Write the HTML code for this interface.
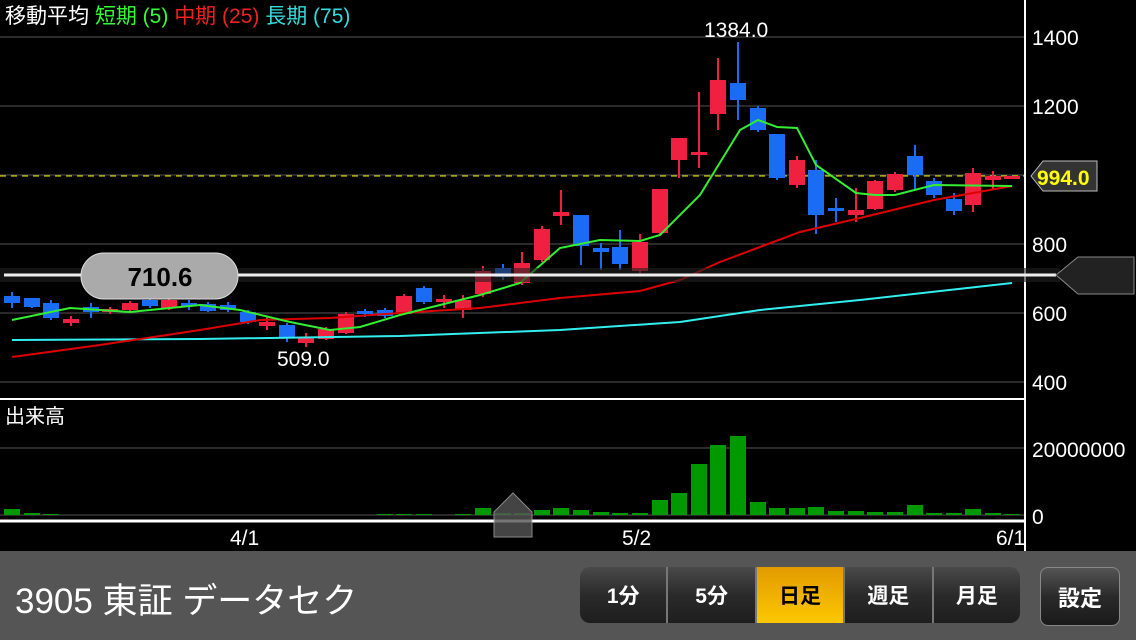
<!DOCTYPE html>
<html><head><meta charset="utf-8"><style>
body{margin:0;width:1136px;height:640px;background:#000;overflow:hidden;font-family:"Liberation Sans","Noto Sans CJK JP",sans-serif;}
svg{position:absolute;left:0;top:0}
.bar{position:absolute;left:0;top:551px;width:1136px;height:89px;background:#555;}
.title{position:absolute;left:15px;top:22px;color:#fff;font-size:35px;}
.seg{position:absolute;left:580px;top:16px;width:440px;height:56px;border-radius:10px;background:linear-gradient(#4a4a4a,#2a2a2a 50%,#1e1e1e);display:flex;overflow:hidden;}
.seg div{flex:1;color:#fff;font-size:21px;font-weight:bold;display:flex;align-items:center;justify-content:center;border-right:2px solid #777}
.seg div:last-child{border-right:none}
.seg .on{background:linear-gradient(#e39a00,#fbc800);color:#000}
.set{position:absolute;left:1040px;top:16px;width:80px;height:59px;border-radius:8px;background:linear-gradient(#555,#2a2a2a 50%,#1a1a1a);border:1px solid #888;box-sizing:border-box;color:#fff;font-size:22px;font-weight:bold;display:flex;align-items:center;justify-content:center}
</style></head><body>
<svg width="1136" height="640" font-family="Liberation Sans, Noto Sans CJK JP, sans-serif">
<g stroke="#555" stroke-width="1">
<line x1="0" y1="37" x2="1025" y2="37"/><line x1="0" y1="106" x2="1025" y2="106"/><line x1="0" y1="175" x2="1025" y2="175"/><line x1="0" y1="244" x2="1025" y2="244"/><line x1="0" y1="313" x2="1025" y2="313"/><line x1="0" y1="382" x2="1025" y2="382"/><line x1="0" y1="448" x2="1025" y2="448"/><line x1="0" y1="515" x2="1025" y2="515"/>
</g>
<line x1="0" y1="176" x2="1025" y2="176" stroke="#ee0" stroke-dasharray="6,5"/>
<line x1="0" y1="399" x2="1025" y2="399" stroke="#fff" stroke-width="2"/>
<line x1="1025" y1="0" x2="1025" y2="551" stroke="#fff" stroke-width="2"/>
<line x1="0" y1="521" x2="1025" y2="521" stroke="#fff" stroke-width="3"/>
<g fill="#fff" font-size="21">
<text x="1032" y="45">1400</text><text x="1032" y="114">1200</text><text x="1032" y="252">800</text><text x="1032" y="321">600</text><text x="1032" y="390">400</text><text x="1032" y="457">20000000</text><text x="1032" y="524">0</text>
<text x="230" y="545">4/1</text><text x="622" y="545">5/2</text><text x="996" y="545">6/1</text>
<text x="277" y="366">509.0</text><text x="704" y="37">1384.0</text>
<text x="5" y="423" font-size="20">出来高</text>
</g>
<text x="5" y="23" font-size="21" fill="#fff">移動平均 <tspan fill="#3f3">短期 (5)</tspan> <tspan fill="#e22">中期 (25)</tspan> <tspan fill="#3dd">長期 (75)</tspan></text>
<g id="c"></g>
<polyline fill="none" stroke="#3ee" stroke-width="2" points="12,340 200,339 400,336 560,330 680,322 760,310 860,300 1012,283"/>
<polyline fill="none" stroke="#d00" stroke-width="2" points="12,357 100,345 200,330 260,320 330,318 400,313 480,308 560,298 640,291 680,280 720,262 800,232 860,218 934,200 1012,186"/>
<polyline fill="none" stroke="#3e3" stroke-width="2" points="12,320 70,308 130,312 200,305 240,310 290,322 330,330 360,327 400,315 440,305 480,295 520,283 560,248 600,240 640,241 660,235 700,195 740,130 758,120 777,127 797,128 816,165 856,193 875,195 895,195 934,185 1012,186"/>
<rect x="0" y="268" width="1060" height="14" fill="#222" opacity=".6"/>
<line x1="4" y1="275" x2="1056" y2="275" stroke="#eee" stroke-width="3"/>
<rect x="81" y="253" width="157" height="46" rx="23" fill="#aaa" stroke="#ddd"/>
<text x="160" y="286" font-size="26" font-weight="bold" text-anchor="middle" fill="#000">710.6</text>
<path d="M1056,275 L1078,257 H1134 V294 H1078 Z" fill="#222" stroke="#888"/>
<path d="M1031,176 L1043,161 H1097 V191 H1043 Z" fill="#333" stroke="#bbb"/>
<text x="1037" y="185" font-size="21" font-weight="bold" fill="#ff0">994.0</text>
<path d="M494,537 V512 L513,493 L532,512 V537 Z" fill="#555" opacity=".8" stroke="#aaa"/>
</svg>
<script>
var C=[[12,'b',296,303,292,308,6],[32,'b',298,307,298,308,2],[51,'b',303,318,300,320,1],[71,'r',319,323,316,326,0],[91,'b',307,312,303,318,0],[110,'r',309,312,307,314,0],[130,'r',303,310,301,312,0],[150,'b',300,306,298,308,0],[169,'r',300,308,298,310,0],[189,'b',303,306,300,310,0],[208,'b',304,311,302,312,0],[228,'b',305,310,302,312,0],[248,'b',312,322,310,324,0],[267,'r',322,326,316,330,0],[287,'b',325,338,323,342,0],[306,'r',337,343,333,347,0],[326,'r',329,339,327,340,0],[346,'r',314,333,312,334,0],[365,'b',311,314,309,317,0],[385,'b',310,316,308,318,1],[404,'r',296,314,294,315,1],[424,'b',288,302,286,304,1],[444,'r',299,302,295,308,0],[463,'r',300,310,295,318,1],[483,'r',271,294,266,297,7],[503,'b',268,277,264,280,2],[522,'r',263,283,252,285,2],[542,'r',229,260,226,262,5],[561,'r',212,216,190,225,7],[581,'b',215,246,215,265,5],[601,'b',248,252,243,270,3],[620,'b',247,264,230,270,2],[640,'r',242,271,234,273,2],[660,'r',189,233,189,235,15],[679,'r',138,160,138,178,22],[699,'r',152,155,92,168,51],[718,'r',80,114,58,130,70],[738,'b',83,100,42,120,79],[758,'b',108,130,106,132,13],[777,'b',134,178,134,180,7],[797,'r',160,185,156,188,7],[816,'b',170,215,160,234,8],[836,'b',208,210,198,222,4],[856,'r',210,215,188,222,4],[875,'r',181,209,180,210,3],[895,'r',174,190,172,192,3],[915,'b',156,175,145,190,10],[934,'b',181,195,178,198,2],[954,'b',199,211,193,215,2],[973,'r',173,205,168,212,6],[993,'r',176,180,171,190,2],[1012,'r',176,178,176,178,1]];
var s='';C.forEach(function(c){var col=c[1]=='r'?'#f02040':'#1a6cf5';var x=c[0];var h=Math.max(3,c[3]-c[2]);
s+='<line x1="'+x+'" y1="'+c[4]+'" x2="'+x+'" y2="'+c[5]+'" stroke="'+col+'" stroke-width="2"/>';
s+='<rect x="'+(x-8)+'" y="'+c[2]+'" width="16" height="'+h+'" fill="'+col+'"/>';
if(c[6])s+='<rect x="'+(x-8)+'" y="'+(515-c[6])+'" width="16" height="'+c[6]+'" fill="#090"/>';});
document.getElementById('c').innerHTML=s;
</script>
<div class="bar">
<div class="title">3905 東証 データセク</div>
<div class="seg"><div>1分</div><div>5分</div><div class="on">日足</div><div>週足</div><div>月足</div></div>
<div class="set">設定</div>
</div>
</body></html>
